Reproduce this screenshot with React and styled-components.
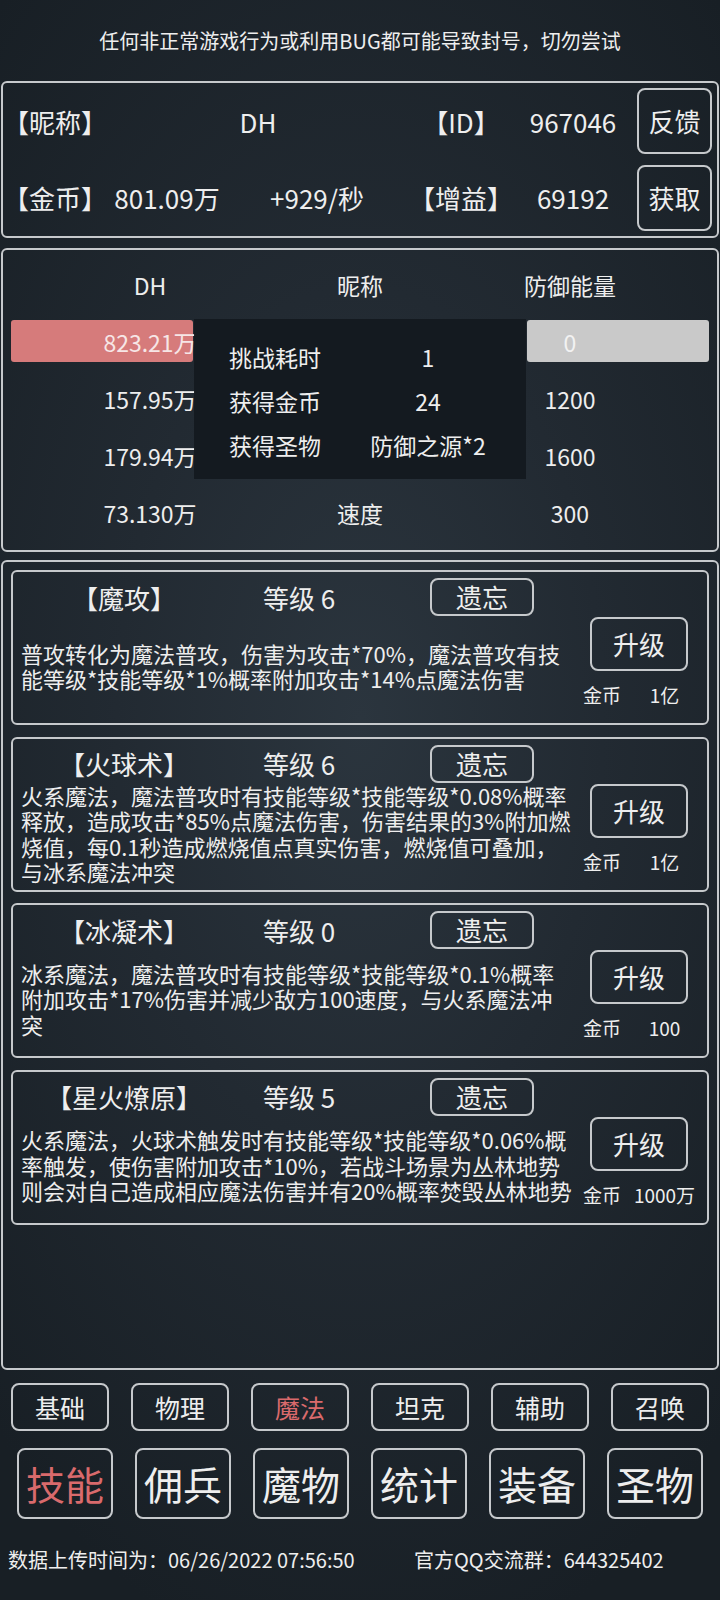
import React from "react";
import styled, { createGlobalStyle } from "styled-components";

const GlobalStyle = createGlobalStyle`
  html, body {
    margin: 0;
    padding: 0;
    background: #181f25;
  }
  * {
    box-sizing: border-box;
  }
`;

// 전체 화면
const Page = styled.div`
  width: 720px;
  min-height: 1600px;
  display: flex;
  flex-direction: column;
  color: #eeeeee;
  font-family: "Noto Sans CJK SC", "Noto Sans", sans-serif;
  background: radial-gradient(
    ellipse 75% 60% at 50% 45%,
    #2b353e 0%,
    #222a32 45%,
    #181f25 100%
  );
`;

const Notice = styled.div`
  height: 81px;
  display: flex;
  align-items: center;
  justify-content: center;
  font-size: 20px;
`;

const Panel = styled.div`
  position: relative;
  margin: ${(props) => props.top || 0}px 1px 0;
  height: ${(props) => props.height}px;
  border: 2px solid #c6c9cc;
  border-radius: 6px;
`;

// 유저 정보
const InfoGrid = styled.div`
  height: 100%;
  display: grid;
  grid-template-columns: 105px 118px 182px 106px 118px 1fr;
  grid-template-rows: 1fr 1fr;
  align-items: center;
  font-size: 26px;
`;

const Cell = styled.div`
  grid-column: ${(props) => props.span || "auto"};
  text-align: ${(props) => props.align || "center"};
  white-space: nowrap;
`;

const BoxButton = styled.button`
  width: ${(props) => props.w}px;
  height: ${(props) => props.h}px;
  margin-left: ${(props) => props.ml || 0}px;
  padding: 0;
  border: 2px solid #c6c9cc;
  border-radius: 8px;
  background: transparent;
  color: ${(props) => (props.active ? "#d96a6c" : "#eeeeee")};
  font-family: inherit;
  font-size: ${(props) => props.fs}px;
  line-height: 1;
  display: flex;
  align-items: center;
  justify-content: center;
`;

// 전투 정보
const BattleBody = styled.div`
  padding: 6px 42px 0;
  font-size: 23px;
`;

const BattleRow = styled.div`
  position: relative;
  height: 57px;
  display: grid;
  grid-template-columns: repeat(3, 210px);
  align-items: center;
  text-align: center;
`;

const Bar = styled.div`
  position: absolute;
  top: 7px;
  left: ${(props) => props.left}px;
  width: 182px;
  height: 42px;
  border-radius: 3px;
  background: ${(props) => props.color};
`;

const BarText = styled.div`
  position: relative;
  color: ${(props) => props.color || "#eeeeee"};
`;

const ResultPopup = styled.div`
  position: absolute;
  top: 69px;
  left: 191px;
  width: 332px;
  height: 160px;
  padding: 16px 4px 0 35px;
  background: rgba(19, 25, 31, 0.94);
  display: grid;
  grid-template-columns: 105px 1fr;
  grid-auto-rows: 44px;
  align-items: center;
  font-size: 23px;
`;

// 스킬 목록
const SkillList = styled.div`
  padding: 8px 8px 0;
  display: flex;
  flex-direction: column;
  gap: 11.5px;
`;

const SkillCard = styled.div`
  height: 155px;
  border: 2px solid #c6c9cc;
  border-radius: 6px;
  display: flex;
`;

const SkillMain = styled.div`
  width: 558px;
  display: flex;
  flex-direction: column;
`;

const SkillHead = styled.div`
  margin-top: 6px;
  height: 38px;
  display: grid;
  grid-template-columns: 222px 195px 104px;
  align-items: center;
  font-size: 26px;
`;

const SkillLevel = styled.div`
  padding-left: 28px;
`;

const SkillDesc = styled.div`
  flex: 1;
  padding: 0 0 7px 8px;
  display: flex;
  align-items: center;
  font-size: 22px;
  line-height: 25.5px;
  white-space: nowrap;
`;

const SkillSide = styled.div`
  flex: 1;
  padding-top: 45px;
  display: flex;
  flex-direction: column;
  align-items: center;
`;

const Cost = styled.div`
  width: 100%;
  margin-top: 12px;
  padding-left: 11px;
  display: grid;
  grid-template-columns: 40px 1fr;
  font-size: 19px;
  line-height: 24px;
  text-align: center;
`;

// 하단 탭
const TabRow = styled.div`
  margin-top: ${(props) => props.top}px;
  padding: 0 ${(props) => props.pad}px;
  display: flex;
  justify-content: space-between;
`;

const Footer = styled.div`
  margin-top: 26px;
  padding-left: 8px;
  height: 28px;
  display: grid;
  grid-template-columns: 406px 1fr;
  align-items: center;
  font-size: 20px;
  white-space: nowrap;
`;

const skills = [
  {
    name: "【魔攻】",
    level: 6,
    cost: "1亿",
    desc: [
      "普攻转化为魔法普攻，伤害为攻击*70%，魔法普攻有技",
      "能等级*技能等级*1%概率附加攻击*14%点魔法伤害",
    ],
  },
  {
    name: "【火球术】",
    level: 6,
    cost: "1亿",
    desc: [
      "火系魔法，魔法普攻时有技能等级*技能等级*0.08%概率",
      "释放，造成攻击*85%点魔法伤害，伤害结果的3%附加燃",
      "烧值，每0.1秒造成燃烧值点真实伤害，燃烧值可叠加，",
      "与冰系魔法冲突",
    ],
  },
  {
    name: "【冰凝术】",
    level: 0,
    cost: "100",
    desc: [
      "冰系魔法，魔法普攻时有技能等级*技能等级*0.1%概率",
      "附加攻击*17%伤害并减少敌方100速度，与火系魔法冲",
      "突",
    ],
  },
  {
    name: "【星火燎原】",
    level: 5,
    cost: "1000万",
    desc: [
      "火系魔法，火球术触发时有技能等级*技能等级*0.06%概",
      "率触发，使伤害附加攻击*10%，若战斗场景为丛林地势",
      "则会对自己造成相应魔法伤害并有20%概率焚毁丛林地势",
    ],
  },
];

const subTabs = ["基础", "物理", "魔法", "坦克", "辅助", "召唤"];
const mainTabs = ["技能", "佣兵", "魔物", "统计", "装备", "圣物"];

function App() {
  return (
    <Page>
      <GlobalStyle />
      <Notice>任何非正常游戏行为或利用BUG都可能导致封号，切勿尝试</Notice>

      <Panel height={157}>
        <InfoGrid>
          <Cell align="left">【昵称】</Cell>
          <Cell span="2 / 4">DH</Cell>
          <Cell>【ID】</Cell>
          <Cell>967046</Cell>
          <BoxButton w={75} h={66} ml={5} fs={26}>
            反馈
          </BoxButton>
          <Cell align="left">【金币】</Cell>
          <Cell>801.09万</Cell>
          <Cell>+929/秒</Cell>
          <Cell>【增益】</Cell>
          <Cell>69192</Cell>
          <BoxButton w={75} h={66} ml={5} fs={26}>
            获取
          </BoxButton>
        </InfoGrid>
      </Panel>

      <Panel height={304} top={10}>
        <BattleBody>
          <BattleRow>
            <div>DH</div>
            <div>昵称</div>
            <div>防御能量</div>
          </BattleRow>
          <BattleRow>
            <Bar left={-34} color="#d67b7b" />
            <Bar left={482} color="#c9c9c9" />
            <BarText color="#f6e6e6">823.21万</BarText>
            <div />
            <BarText color="#f2f2f2">0</BarText>
          </BattleRow>
          <BattleRow>
            <div>157.95万</div>
            <div />
            <div>1200</div>
          </BattleRow>
          <BattleRow>
            <div>179.94万</div>
            <div />
            <div>1600</div>
          </BattleRow>
          <BattleRow>
            <div>73.130万</div>
            <div>速度</div>
            <div>300</div>
          </BattleRow>
        </BattleBody>
        <ResultPopup>
          <div>挑战耗时</div>
          <Cell>1</Cell>
          <div>获得金币</div>
          <Cell>24</Cell>
          <div>获得圣物</div>
          <Cell>防御之源*2</Cell>
        </ResultPopup>
      </Panel>

      <Panel height={810} top={8}>
        <SkillList>
          {skills.map((skill) => (
            <SkillCard key={skill.name}>
              <SkillMain>
                <SkillHead>
                  <Cell>{skill.name}</Cell>
                  <SkillLevel>等级 {skill.level}</SkillLevel>
                  <BoxButton w={104} h={38} fs={26}>
                    遗忘
                  </BoxButton>
                </SkillHead>
                <SkillDesc>
                  <div>
                    {skill.desc.map((line, i) => (
                      <React.Fragment key={i}>
                        {line}
                        {i < skill.desc.length - 1 && <br />}
                      </React.Fragment>
                    ))}
                  </div>
                </SkillDesc>
              </SkillMain>
              <SkillSide>
                <BoxButton w={98} h={54} fs={26}>
                  升级
                </BoxButton>
                <Cost>
                  <div>金币</div>
                  <div>{skill.cost}</div>
                </Cost>
              </SkillSide>
            </SkillCard>
          ))}
        </SkillList>
      </Panel>

      <TabRow top={13} pad={11}>
        {subTabs.map((tab) => (
          <BoxButton key={tab} w={98} h={48} fs={25} active={tab === "魔法"}>
            {tab}
          </BoxButton>
        ))}
      </TabRow>

      <TabRow top={17} pad={17}>
        {mainTabs.map((tab) => (
          <BoxButton key={tab} w={96} h={71} fs={39} active={tab === "技能"}>
            {tab}
          </BoxButton>
        ))}
      </TabRow>

      <Footer>
        <div>数据上传时间为：06/26/2022 07:56:50</div>
        <div>官方QQ交流群：644325402</div>
      </Footer>
    </Page>
  );
}

export default App;
